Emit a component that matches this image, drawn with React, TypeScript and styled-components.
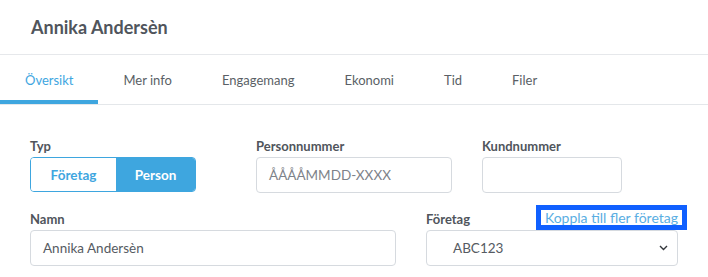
import styled, { createGlobalStyle } from "styled-components";

const GlobalStyle = createGlobalStyle`
  html, body {
    margin: 0;
    background: #ffffff;
    font-family: Lato, "Open Sans", sans-serif;
  }
`;

const BLUE = "#3ea6df";
const TEXT = "#50555c";

const Header = styled.div`
  height: 54px;
  display: flex;
  align-items: center;
  padding-left: 31px;
  border-bottom: 1px solid #e6e8eb;
`;

const Title = styled.h1`
  margin: 0;
  font-size: 18px;
  font-weight: 700;
  color: ${TEXT};
`;

const TabBar = styled.nav`
  display: flex;
  height: 49px;
  border-bottom: 1px solid #e4e7ea;
`;

const Tab = styled.div<{ $active?: boolean }>`
  display: flex;
  align-items: center;
  padding: 0 25px;
  font-size: 13px;
  color: ${(p) => (p.$active ? BLUE : "#5a5f66")};
  box-shadow: ${(p) => (p.$active ? `inset 0 -4px 0 ${BLUE}` : "none")};
`;

const Form = styled.div`
  padding: 33px 30px 0;
  display: flex;
  flex-direction: column;
  gap: 18px;
`;

const Row = styled.div`
  display: flex;
  gap: 30px;
`;

const Field = styled.div<{ $width: number }>`
  width: ${(p) => p.$width}px;
  display: flex;
  flex-direction: column;
  gap: 3px;
`;

const LabelRow = styled.div`
  display: flex;
  justify-content: space-between;
  align-items: flex-end;
  height: 16px;
`;

const Label = styled.label`
  font-size: 13px;
  font-weight: 700;
  line-height: 16px;
  color: ${TEXT};
`;

const Link = styled.a`
  display: inline-block;
  font-size: 14px;
  line-height: 15px;
  padding: 0 4px;
  margin: 0 -9px -3px 0;
  color: #5aaee2;
  text-decoration: none;
  border: 5px solid #1060ff;
`;

const Toggle = styled.div`
  display: flex;
  width: 166px;
  height: 35px;
  box-sizing: border-box;
  border: 1px solid ${BLUE};
  border-radius: 4px;
  overflow: hidden;
`;

const ToggleOption = styled.div<{ $on?: boolean; $width: number }>`
  width: ${(p) => p.$width}px;
  display: flex;
  align-items: center;
  justify-content: center;
  font-size: 13.5px;
  font-weight: 700;
  background: ${(p) => (p.$on ? BLUE : "#ffffff")};
  color: ${(p) => (p.$on ? "#ffffff" : BLUE)};
`;

const Input = styled.div<{ $muted?: boolean; $pad?: number }>`
  height: 36px;
  box-sizing: border-box;
  border: 1px solid #d6dadf;
  border-radius: 4px;
  display: flex;
  align-items: center;
  justify-content: space-between;
  padding: 0 9px 0 ${(p) => p.$pad ?? 12}px;
  font-size: 13.5px;
  color: ${(p) => (p.$muted ? "#7d8289" : "#565b62")};
`;

const Chevron = () => (
  <svg width="9" height="6" viewBox="0 0 9 6">
    <path d="M1 1l3.5 3.5L8 1" fill="none" stroke="#33373c" strokeWidth="1.4" />
  </svg>
);

export default function App() {
  return (
    <>
      <GlobalStyle />
      <Header>
        <Title>Annika Andersèn</Title>
      </Header>
      <TabBar>
        <Tab $active>Översikt</Tab>
        <Tab>Mer info</Tab>
        <Tab>Engagemang</Tab>
        <Tab>Ekonomi</Tab>
        <Tab>Tid</Tab>
        <Tab>Filer</Tab>
      </TabBar>
      <Form>
        <Row>
          <Field $width={196}>
            <LabelRow>
              <Label>Typ</Label>
            </LabelRow>
            <Toggle>
              <ToggleOption $width={85}>Företag</ToggleOption>
              <ToggleOption $width={79} $on>
                Person
              </ToggleOption>
            </Toggle>
          </Field>
          <Field $width={196}>
            <LabelRow>
              <Label>Personnummer</Label>
            </LabelRow>
            <Input $muted>ÅÅÅÅMMDD-XXXX</Input>
          </Field>
          <Field $width={140}>
            <LabelRow>
              <Label>Kundnummer</Label>
            </LabelRow>
            <Input />
          </Field>
        </Row>
        <Row>
          <Field $width={366}>
            <LabelRow>
              <Label>Namn</Label>
            </LabelRow>
            <Input>Annika Andersèn</Input>
          </Field>
          <Field $width={252}>
            <LabelRow>
              <Label>Företag</Label>
              <Link href="#">Koppla till fler företag</Link>
            </LabelRow>
            <Input $pad={26}>
              ABC123
              <Chevron />
            </Input>
          </Field>
        </Row>
      </Form>
    </>
  );
}
